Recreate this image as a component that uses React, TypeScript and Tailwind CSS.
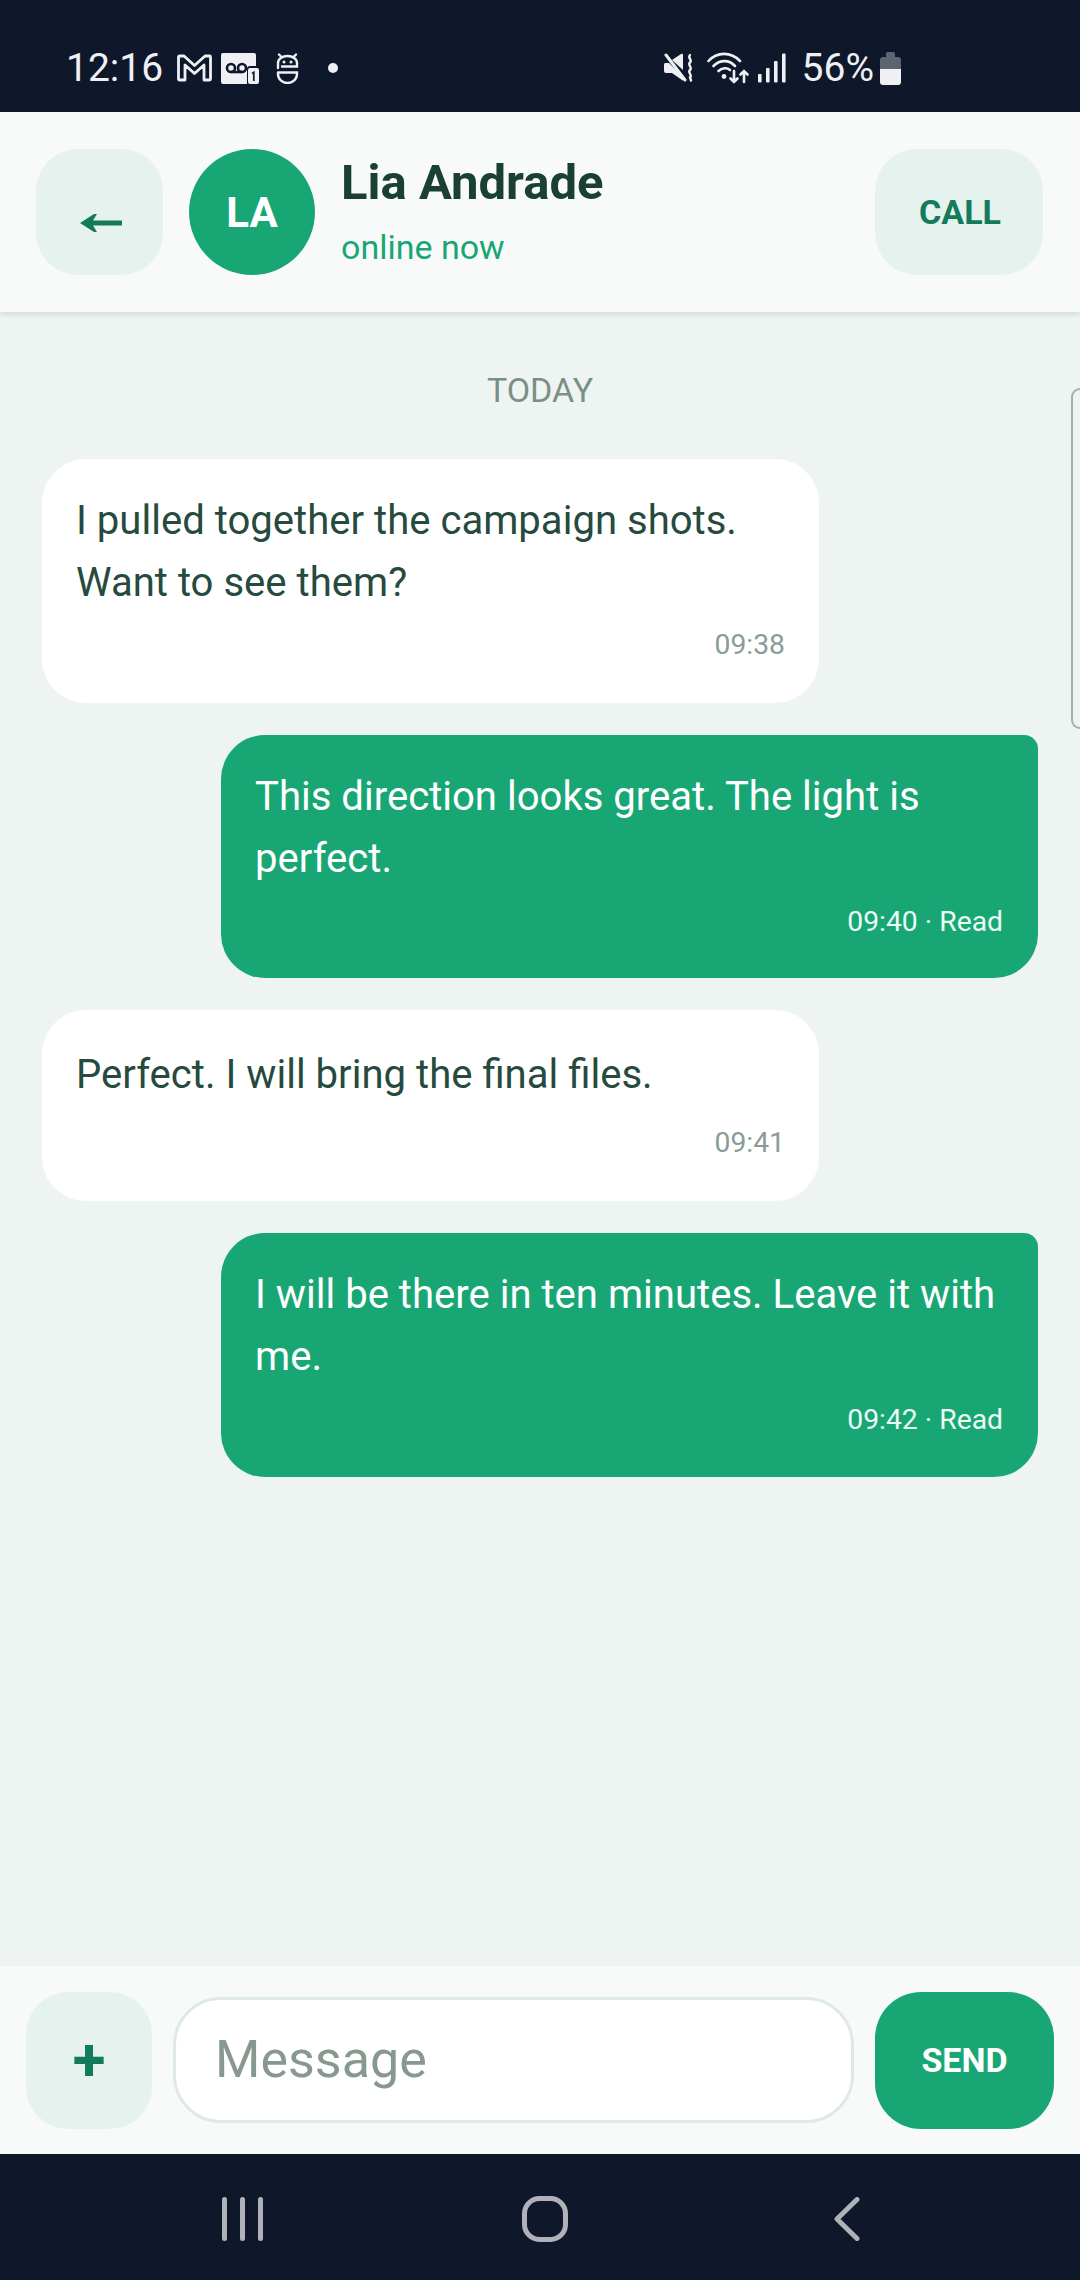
const font = { fontFamily: "Roboto, sans-serif" };

function GmailIcon() {
  return (
    <svg width="35" height="28" viewBox="0 0 35 28" fill="none" stroke="#eef0f3" strokeWidth="2.800" strokeLinejoin="round">
      <path d="M2.500 2H7L17.500 11.500 28 2H32.500a1 1 0 0 1 1 1V25a1 1 0 0 1-1 1H27V11L17.500 19.500 8 11V26H2.500a1 1 0 0 1-1-1V3a1 1 0 0 1 1-1Z" />
    </svg>
  );
}

function VoicemailIcon() {
  return (
    <svg width="38" height="31" viewBox="0 0 38 31">
      <path d="M2 0H33a2 2 0 0 1 2 2V13H29a3 3 0 0 0-3 3V31H2a2 2 0 0 1-2-2V2a2 2 0 0 1 2-2Z" fill="#eef0f3" />
      <circle cx="10" cy="15" r="4" fill="none" stroke="#0f172a" strokeWidth="2.600" />
      <circle cx="21" cy="15" r="4" fill="none" stroke="#0f172a" strokeWidth="2.600" />
      <path d="M10 19H21" stroke="#0f172a" strokeWidth="2.600" />
      <rect x="27" y="15" width="11" height="16" rx="2" fill="#eef0f3" />
      <path d="M31 20.500l1.800-1.200V28" fill="none" stroke="#0f172a" strokeWidth="1.700" />
    </svg>
  );
}

function RobotIcon() {
  return (
    <svg width="23" height="31" viewBox="0 0 23 31" fill="none" stroke="#eef0f3" strokeWidth="2.400" strokeLinecap="round">
      <path d="M2 15V10a9.500 7 0 0 1 19 0v3.500H6" />
      <path d="M2 19.500H21v1.500a9.500 9 0 0 1-19 0v-1.500" />
      <path d="M3 1.500l2.500 2.500M20 1.500l-2.500 2.500" />
      <circle cx="8" cy="9" r="1.500" fill="#eef0f3" stroke="none" />
      <circle cx="15" cy="9" r="1.500" fill="#eef0f3" stroke="none" />
    </svg>
  );
}

function MuteIcon() {
  return (
    <svg width="30" height="30" viewBox="0 0 30 30" fill="none">
      <path d="M1 10H5L7 12 19 24V27Q19 28 18 27L8 20H2Q0 20 0 18V12Q0 10 1 10Z" fill="#eef0f3" />
      <path d="M8 7L17 1Q19 0 19 2V17Z" fill="#eef0f3" />
      <path d="M2 2L21 27" stroke="#eef0f3" strokeWidth="3" strokeLinecap="round" />
      <path d="M26 2c-3 3 3 5 0 7.500s3 5 0 7.500 3 5 0 7.500l1 3" stroke="#eef0f3" strokeWidth="2.400" strokeLinecap="round" />
    </svg>
  );
}

function WifiIcon() {
  return (
    <svg width="42" height="32" viewBox="0 0 42 32" fill="none" stroke="#eef0f3" strokeWidth="2.600" strokeLinecap="round">
      <path d="M1.500 9C10 -0.500 24 -0.500 33 9" />
      <path d="M6.500 14C13 7.500 22 7.500 28 14" />
      <path d="M11.500 19C15 15.500 20 15.500 23 18" />
      <circle cx="17" cy="24.500" r="2.400" fill="#eef0f3" stroke="none" />
      <path d="M27 19V30M23.500 26.500L27 30 30.500 26.500" />
      <path d="M37 30V19M33.500 22.500L37 19 40.500 22.500" />
    </svg>
  );
}

function SignalIcon() {
  return (
    <svg width="28" height="30" viewBox="0 0 28 30" fill="#eef0f3">
      <rect x="0" y="21" width="3.600" height="8.500" rx="1" />
      <rect x="8" y="15" width="3.600" height="14.500" rx="1" />
      <rect x="16" y="8" width="3.600" height="21.500" rx="1" />
      <rect x="24" y="0.500" width="3.600" height="29" rx="1" />
    </svg>
  );
}

function BatteryIcon() {
  return (
    <svg width="21" height="33" viewBox="0 0 21 33">
      <path d="M6 1.500a1.500 1.500 0 0 1 1.500-1.500h6a1.500 1.500 0 0 1 1.500 1.500V5h3a3 3 0 0 1 3 3V17H0V8a3 3 0 0 1 3-3h3Z" fill="#5d6371" />
      <path d="M0 17H21V30a3 3 0 0 1-3 3H3a3 3 0 0 1-3-3Z" fill="#eef0f3" />
    </svg>
  );
}

function StatusBar() {
  return (
    <div className="flex h-[112px] shrink-0 items-center justify-between bg-[#0f172a] pt-[24px] pr-[179px] pl-[66px] text-[39px] leading-none text-[#eef0f3]">
      <div className="flex items-center">
        <span>12:16</span>
        <span className="ml-[14px] flex"><GmailIcon /></span>
        <span className="ml-[9px] flex"><VoicemailIcon /></span>
        <span className="ml-[17px] flex"><RobotIcon /></span>
        <span className="ml-[29px] h-[10px] w-[10px] rounded-full bg-[#eef0f3]" />
      </div>
      <div className="flex items-center">
        <MuteIcon />
        <span className="ml-[13px] flex"><WifiIcon /></span>
        <span className="ml-[9px] flex"><SignalIcon /></span>
        <span className="ml-[16px]">56%</span>
        <span className="ml-[6px] flex"><BatteryIcon /></span>
      </div>
    </div>
  );
}

function Header() {
  return (
    <div className="relative z-10 flex h-[200px] shrink-0 items-center bg-[#f8faf9] pr-[37px] pl-[36px] shadow-[0_2px_6px_rgba(20,60,45,0.15)]">
      <div className="flex h-[126px] w-[127px] shrink-0 items-center justify-center rounded-[42px] bg-[#e6f2ee] pt-[22px] pl-[2px]">
        <svg width="44" height="20" viewBox="0 0 44 20" fill="#147a5c">
          <path d="M1 10L15 1H18L14 7.500H43V12.500H14L18 19H15Z" />
        </svg>
      </div>
      <div className="ml-[26px] flex h-[126px] w-[126px] shrink-0 items-center justify-center rounded-full bg-[#18a774] text-[42px] font-bold text-white">LA</div>
      <div className="ml-[26px] flex flex-col pb-[2px]">
        <div className="text-[49px] leading-[60px] font-bold text-[#1a4033]">Lia Andrade</div>
        <div className="mt-[12px] text-[34px] leading-[44px] text-[#18a774]">online now</div>
      </div>
      <div className="ml-auto flex h-[126px] w-[168px] shrink-0 items-center justify-center rounded-[42px] bg-[#e6f2ee] pl-[2px] text-[34px] font-bold text-[#147a5c]">CALL</div>
    </div>
  );
}

type MessageProps = { text: string; time: string; mine?: boolean; short?: boolean };

function Message({ text, time, mine, short }: MessageProps) {
  return mine ? (
    <div className="flex h-[243.5px] w-[817px] flex-col self-end rounded-[44px] rounded-tr-[14px] bg-[#18a774] pt-[31px] pr-[35px] pl-[34px] text-white">
      <div className="text-[40.1px] leading-[62px]">{text}</div>
      <div className="mt-[12px] text-right text-[28.3px] leading-[40px] text-[#eafaf4]">{time}</div>
    </div>
  ) : (
    <div className={short
      ? "flex h-[191px] w-[777px] flex-col rounded-[44px] bg-white px-[34px] pt-[34px] text-[#264a3e]"
      : "flex h-[243.5px] w-[777px] flex-col rounded-[44px] bg-white px-[34px] pt-[31px] text-[#264a3e]"}>
      <div className="text-[40.1px] leading-[62px]">{text}</div>
      <div className={short
        ? "mt-[17px] text-right text-[28.3px] leading-[40px] text-[#8a9c95]"
        : "mt-[11px] text-right text-[28.3px] leading-[40px] text-[#8a9c95]"}>{time}</div>
    </div>
  );
}

function Composer() {
  return (
    <div className="flex h-[188px] shrink-0 items-center bg-[#f8faf9] pr-[26px] pl-[26px]">
      <div className="flex h-[137px] w-[126px] shrink-0 items-center justify-center rounded-[42px] bg-[#e6f2ee] text-[60px] leading-none font-bold text-[#147a5c]">+</div>
      <div className="ml-[21px] flex h-[126px] flex-1 items-center rounded-[48px] border-[3px] border-[#dfeae6] bg-white pl-[39px] text-[52px] text-[#87998f]">Message</div>
      <div className="ml-[21px] flex h-[137px] w-[179px] shrink-0 items-center justify-center rounded-[46px] bg-[#18a774] text-[34px] font-bold text-white">SEND</div>
    </div>
  );
}

function NavBar() {
  return (
    <div className="flex h-[126px] shrink-0 items-center bg-[#0f172a] pt-[4px] pl-[222px]">
      <svg width="41" height="44" viewBox="0 0 41 44" fill="#b1b2b9">
        <rect x="0" y="0" width="5" height="44" rx="2.500" />
        <rect x="18" y="0" width="5" height="44" rx="2.500" />
        <rect x="36" y="0" width="5" height="44" rx="2.500" />
      </svg>
      <svg className="ml-[259px]" width="46" height="46" viewBox="0 0 46 46" fill="none" stroke="#b1b2b9" strokeWidth="5">
        <rect x="2.500" y="2.500" width="41" height="41" rx="15" />
      </svg>
      <svg className="ml-[266px]" width="26" height="44" viewBox="0 0 26 44" fill="none" stroke="#b1b2b9" strokeWidth="5" strokeLinecap="round" strokeLinejoin="round">
        <path d="M23 2.500L3 22 23 41.500" />
      </svg>
    </div>
  );
}

export default function App() {
  return (
    <div className="relative flex h-[2280px] w-[1080px] flex-col overflow-hidden bg-[#eef4f2]" style={font}>
      <StatusBar />
      <Header />
      <div className="flex flex-1 flex-col pt-[58px] pr-[42px] pl-[42px]">
        <div className="text-center text-[34px] leading-[40px] text-[#7c8f87]">TODAY</div>
        <div className="mt-[49px] flex flex-col gap-[32px]">
          <Message text="I pulled together the campaign shots. Want to see them?" time="09:38" />
          <Message mine text="This direction looks great. The light is perfect." time="09:40 · Read" />
          <Message short text="Perfect. I will bring the final files." time="09:41" />
          <Message mine text="I will be there in ten minutes. Leave it with me." time="09:42 · Read" />
        </div>
      </div>
      <Composer />
      <NavBar />
      {/* edge panel handle */}
      <div className="absolute top-[388px] right-0 h-[341px] w-[9px] rounded-l-[10px] border-y-[2px] border-l-[2px] border-[#a9adac]" />
    </div>
  );
}
